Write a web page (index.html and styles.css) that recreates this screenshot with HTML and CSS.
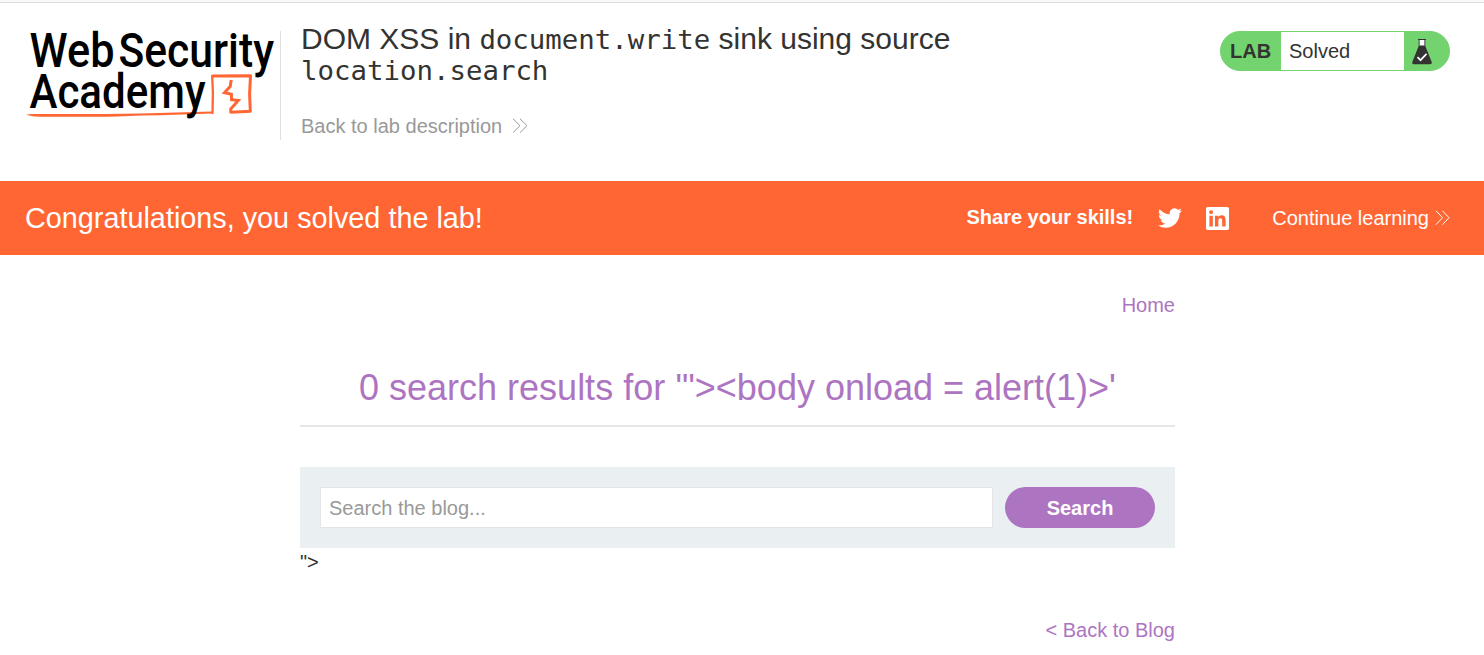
FILE: index.html
```html
<!DOCTYPE html>
<html lang="en">
<head>
<meta charset="utf-8">
<title>DOM XSS in document.write sink using source location.search</title>
<link rel="stylesheet" href="styles.css">
</head>
<body>
<header class="lab-header">
  <svg class="logo" width="254" height="110" viewBox="26 30 254 110" role="img" aria-label="Web Security Academy">
    <path fill="#ff6633" d="M26 114.800 Q29 113.800 33 113.900 Q90 114.400 140 113.400 L211.500 111.500 L213.700 113.600 L160 115.300 Q140 115.500 129 116 Q118 117 90 116.800 Q40 117 33 116.200Z"/>
    <g fill="none" stroke="#ff6633" stroke-linecap="round" stroke-linejoin="round">
      <path stroke-width="2.300" d="M212.500 113 L212.900 93 L212.200 76"/>
      <path stroke-width="3" d="M213 76 L250.500 75.800 L249.600 94 L250.300 111.300 L231 112.200"/>
      <path stroke-width="3" stroke-linejoin="miter" stroke-linecap="butt" d="M231.200 80 L230.200 86.500 L224.500 92.600 L231.400 94.200 L231.500 99.700 L238.300 100.400 L230.700 109 L231 112.500"/>
    </g>
    <g class="logo-text">
      <text x="29.500" y="67" textLength="85" lengthAdjust="spacingAndGlyphs">Web</text>
      <text x="118.500" y="67" textLength="155.500" lengthAdjust="spacingAndGlyphs">Security</text>
      <text x="29.500" y="107.500" textLength="176" lengthAdjust="spacingAndGlyphs">Academy</text>
    </g>
  </svg>
  <div class="lab-info">
    <h2 class="lab-title">DOM XSS in <code>document.write</code> sink using source <code>location.search</code></h2>
    <a class="lab-back" href="#">Back to lab description
      <svg class="chevrons" width="16" height="16" viewBox="0 0 16 16"><path d="M1 .8 8 7.700 1 14.600M8 .8 15 7.700 8 14.600"/></svg>
    </a>
  </div>
  <div class="lab-status">
    <span class="status-label">LAB</span>
    <span class="status-value">Solved</span>
    <span class="status-icon">
      <svg width="20" height="26" viewBox="0 0 20 26">
        <path fill="#fff" d="M7 1h6v6H7z"/>
        <path fill="#333332" d="M6 0h8v1h-.7V7L19.700 23q.6 2-1.500 2.200H1.800Q-.3 25 .3 23L6.700 7V1H6zM7.600 1v5.500h4.800V1z"/>
        <path fill="none" stroke="#fff" stroke-width="1.700" d="M5.500 18.200l3 3 6-6.300"/>
      </svg>
    </span>
  </div>
</header>
<section class="banner">
  <p class="banner-message">Congratulations, you solved the lab!</p>
  <span class="share">Share your skills!</span>
  <a class="social twitter" href="#" aria-label="Twitter"><svg width="24" height="24" viewBox="0 0 24 24"><path fill="#fff" d="M23.950 4.570a10 10 0 0 1-2.820.770 4.960 4.960 0 0 0 2.160-2.720c-.950.550-2 .950-3.130 1.180a4.920 4.920 0 0 0-8.380 4.480C7.690 8.090 4.070 6.130 1.640 3.160a4.930 4.930 0 0 0 1.520 6.570 4.900 4.900 0 0 1-2.230-.610v.060a4.920 4.920 0 0 0 3.950 4.830 5 5 0 0 1-2.210.080 4.940 4.940 0 0 0 4.600 3.420A9.870 9.870 0 0 1 0 19.540a13.990 13.990 0 0 0 7.550 2.210c9.050 0 14-7.500 14-13.980 0-.210 0-.420-.020-.630A9.940 9.940 0 0 0 24 4.590z"/></svg></a>
  <a class="social linkedin" href="#" aria-label="LinkedIn"><svg width="23" height="23" viewBox="0 0 24 24"><path fill="#fff" d="M20.447 20.452h-3.554v-5.569c0-1.328-.027-3.037-1.852-3.037-1.853 0-2.136 1.445-2.136 2.939v5.667H9.351V9h3.414v1.561h.046c.477-.9 1.637-1.850 3.370-1.850 3.601 0 4.267 2.370 4.267 5.455v6.286zM5.337 7.433a2.062 2.062 0 1 1 0-4.126 2.062 2.062 0 0 1 0 4.126zm1.782 13.019H3.555V9h3.564v11.452zM22.225 0H1.771C.792 0 0 .774 0 1.729v20.542C0 23.227.792 24 1.771 24h20.451C23.200 24 24 23.227 24 22.271V1.729C24 .774 23.200 0 22.222 0h.003z"/></svg></a>
  <a class="continue" href="#">Continue learning
    <svg class="chevrons" width="16" height="16" viewBox="0 0 16 16"><path d="M1 .8 7.500 7.700 1 14.600M7.500 .8 14 7.700 7.500 14.600"/></svg>
  </a>
</section>
<main class="blog">
  <nav class="nav"><a href="#">Home</a></nav>
  <h1 class="results">0 search results for '"&gt;&lt;body onload = alert(1)&gt;'</h1>
  <form class="search">
    <input class="search-input" type="text" placeholder="Search the blog...">
    <button class="search-button" type="button">Search</button>
  </form>
  <div class="leftover">"&gt;</div>
  <div class="back"><a href="#">&lt; Back to Blog</a></div>
</main>
</body>
</html>
```
FILE: styles.css
```css
* { box-sizing: border-box; }
body {
  margin: 0;
  border-top: 2px solid #f8f9fa;
  background: #fff;
  color: #333332;
  font: 20px/24px "Liberation Sans", Arial, sans-serif;
  height: 655px;
  overflow: hidden;
}
a { color: inherit; text-decoration: none; }
.lab-header {
  display: flex;
  align-items: flex-start;
  height: 179px;
  padding: 0 34px 0 26px;
  border-top: 1px solid #dadce0;
}
.logo { flex: none; margin-top: 27px; overflow: visible; }
.logo-text { font: 500 47.5px Roboto, sans-serif; fill: #000; }
.lab-info {
  width: 700px;
  height: 109px;
  margin-top: 28px;
  padding-left: 20px;
  border-left: 1px solid #e0e0e0;
}
.lab-title { margin: -8px 0 0; font-size: 30px; line-height: 31px; font-weight: 400; }
.lab-title code { font: 27.4px/20px "DejaVu Sans Mono", monospace; }
.lab-back { display: flex; align-items: center; gap: 10px; margin-top: 29px; color: #999; }
.chevrons { fill: none; stroke: currentColor; stroke-width: 1; }
.lab-status {
  display: flex;
  width: 230px;
  height: 40px;
  margin: 28px 0 0 auto;
  border: 1px solid #72d36f;
  border-radius: 20px;
  overflow: hidden;
  background: #72d36f;
  line-height: 38px;
}
.status-label { width: 60px; padding-left: 9px; font-weight: 700; }
.status-value { width: 123px; padding-left: 8px; background: #fff; }
.status-icon { padding: 7px 0 0 8px; line-height: 0; }
.banner {
  display: flex;
  align-items: center;
  height: 74px;
  padding: 0 33px 0 25px;
  background: #ff6633;
  color: #fff;
}
.banner-message { margin: 0 auto 0 0; font-size: 28.8px; line-height: 34px; }
.share { margin-right: 25px; padding-bottom: 2px; font-weight: 700; }
.social { display: flex; }
.linkedin { margin: 0 43px 0 24px; }
.continue { display: flex; align-items: center; gap: 6px; }
.blog { width: 875px; margin: 0 0 0 300px; }
.nav { padding-top: 38px; text-align: right; color: #ad74c2; }
.results {
  margin: 49px 0 40px;
  height: 61px;
  border-bottom: 2px solid #e6e6e6;
  color: #ad74c2;
  font-size: 36px;
  line-height: 44px;
  font-weight: 400;
  text-align: center;
}
.search { display: flex; gap: 12px; height: 81px; padding: 20px; background: #eaeff2; }
.search-input {
  flex: 1;
  min-width: 0;
  padding: 0 8px;
  border: 1px solid #e4e4e4;
  background: #fff;
  font: inherit;
}
.search-input::placeholder { color: #999; }
.search-button {
  width: 150px;
  border: 0;
  border-radius: 21px;
  background: #ad74c2;
  color: #fff;
  font: inherit;
  font-weight: 700;
}
.leftover { padding-top: 2px; }
.back { margin-top: 44px; text-align: right; color: #ad74c2; }
```
